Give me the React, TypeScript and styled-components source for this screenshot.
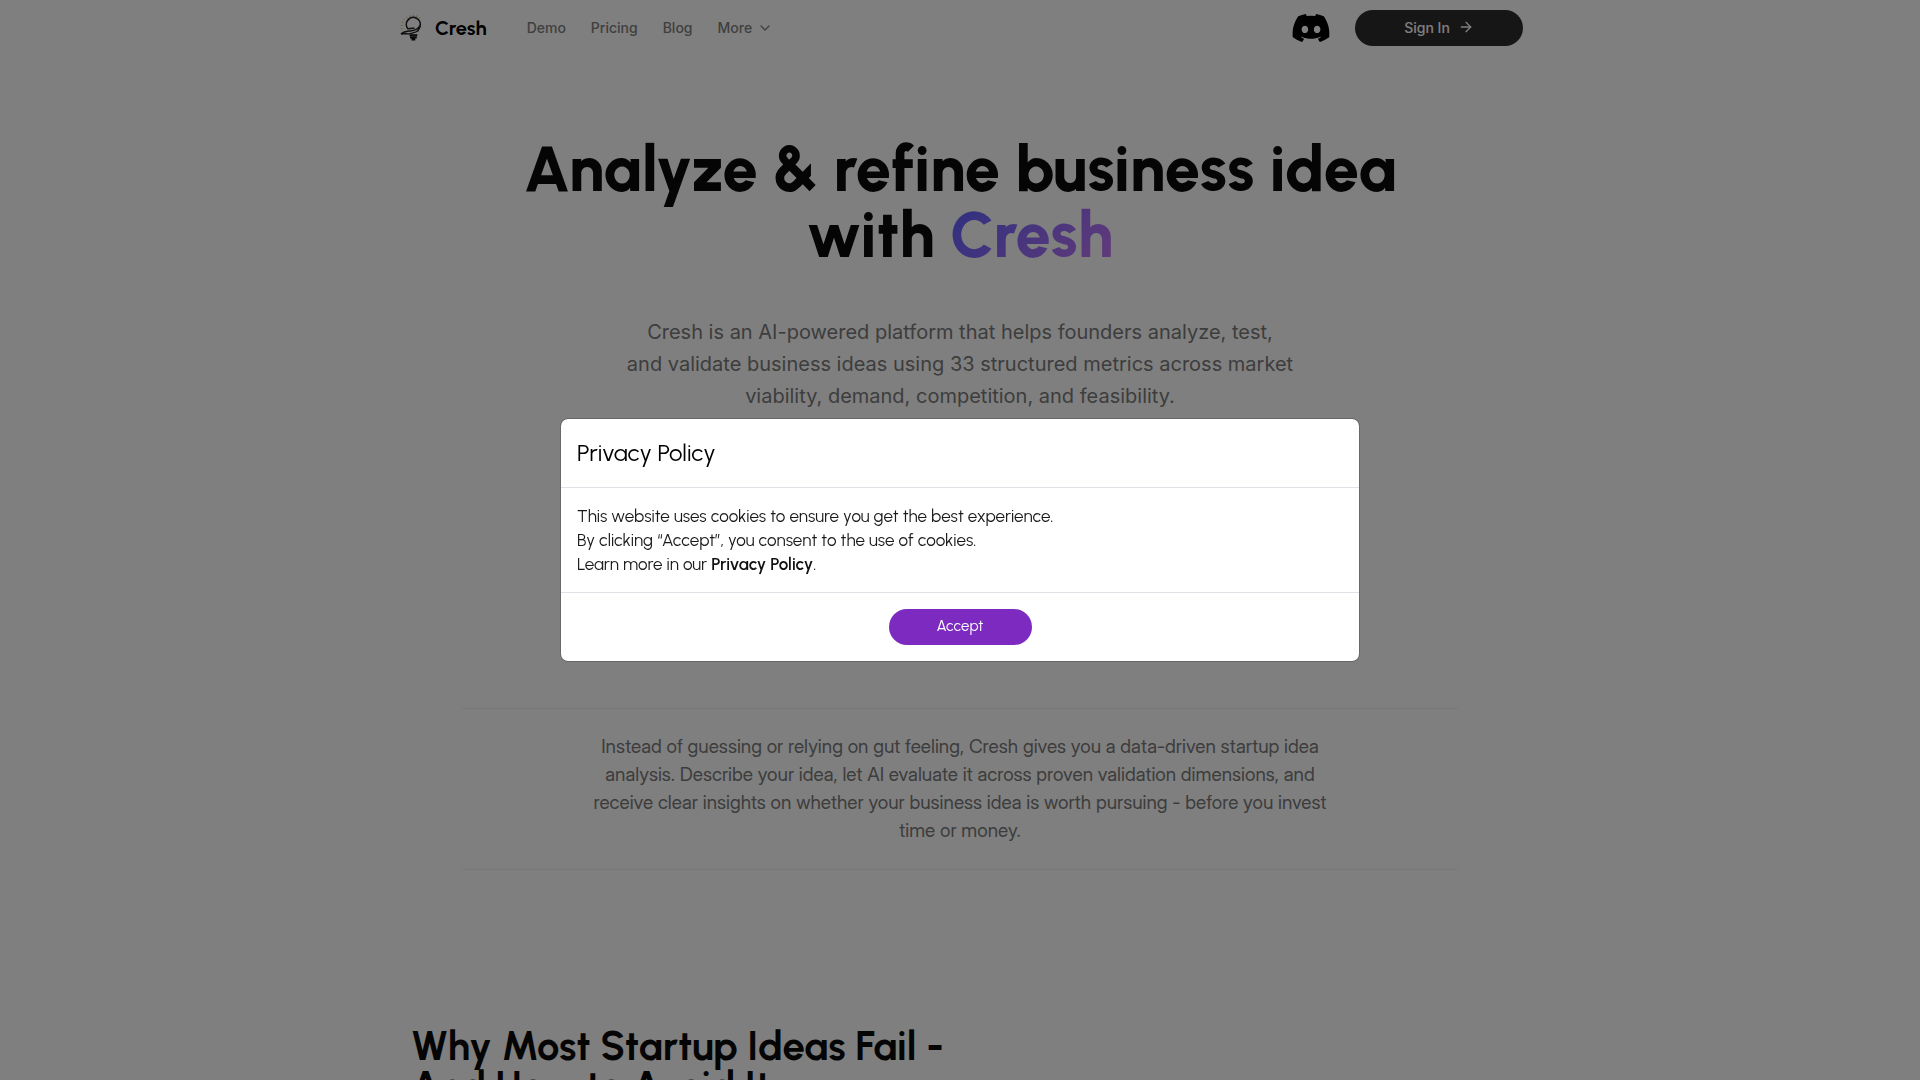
import React, { useState } from "react";
import styled, { createGlobalStyle } from "styled-components";
import { ArrowRight, ChevronDown } from "lucide-react";
import { FaDiscord } from "react-icons/fa";

const display = `Urbanist, Lato, "Open Sans", sans-serif`;
const text = `Inter, Roboto, sans-serif`;

const GlobalStyle = createGlobalStyle`
  *, *::before, *::after { box-sizing: border-box; }
  body {
    margin: 0;
    background: #fff;
    color: #0a0a0a;
    font-family: ${display};
  }
  h1, h2, p { margin: 0; }
`;

const Page = styled.div<{ $locked: boolean }>`
  ${(p) => (p.$locked ? "height: 100vh; overflow: hidden;" : "")}
`;

const Header = styled.header`
  display: flex;
  align-items: center;
  justify-content: space-between;
  width: 100%;
  max-width: 1126px;
  min-height: 56px;
  margin: 0 auto;
`;

const Group = styled.div<{ $gap: number }>`
  display: flex;
  align-items: center;
  gap: ${(p) => p.$gap}px;
`;

const Brand = styled.a`
  display: flex;
  align-items: center;
  gap: 8px;
  color: #000;
  font-size: 20px;
  line-height: 28px;
  font-weight: 700;
  text-decoration: none;
`;

const Nav = styled.nav`
  display: flex;
  align-items: center;
  gap: 25px;
`;

const navText = `
  font-family: ${text};
  font-size: 14px;
  line-height: 20px;
  font-weight: 500;
  color: #808080;
`;

const NavLink = styled.a`
  ${navText}
  text-decoration: none;
`;

const NavButton = styled.button`
  ${navText}
  display: flex;
  align-items: center;
  gap: 5px;
  padding: 0;
  border: 0;
  background: none;
`;

const DiscordLink = styled.a`
  display: flex;
  color: #000;
`;

const SignIn = styled.button`
  display: flex;
  align-items: center;
  justify-content: center;
  gap: 8px;
  width: 168px;
  height: 36px;
  padding: 0 0 2px;
  border: 0;
  border-radius: 18px;
  background: #2c2c2c;
  color: #fff;
  font-family: ${text};
  font-size: 14px;
  font-weight: 500;
`;

const Hero = styled.section`
  display: flex;
  flex-direction: column;
  align-items: center;
  gap: 48px;
  padding: 80px 24px 0;
  min-height: 652px;
  text-align: center;
`;

const Title = styled.h1`
  max-width: 960px;
  font-size: 63px;
  line-height: 66px;
  font-weight: 800;
  color: #0a0a0a;
`;

const Accent = styled.span`
  background: linear-gradient(135deg, #6c63ff 15%, #c977f5);
  background-clip: text;
  -webkit-background-clip: text;
  color: transparent;
`;

const Lead = styled.p`
  max-width: 700px;
  font-family: ${text};
  font-size: 20px;
  line-height: 32px;
  color: #7a7a7a;
`;

const Summary = styled.section`
  display: flex;
  justify-content: center;
  width: 100%;
  max-width: 996px;
  margin: 0 auto;
  padding: 24px;
  border-top: 1px solid #f0f0f0;
  border-bottom: 1px solid #f0f0f0;
`;

const SummaryText = styled.p`
  max-width: 752px;
  font-family: "Inter Display", ${text};
  font-size: 19px;
  line-height: 28px;
  color: #7a7a7a;
  text-align: center;
`;

const Reasons = styled.section`
  max-width: 1098px;
  margin: 0 auto;
  padding: 156px 0;
`;

const SectionTitle = styled.h2`
  max-width: 560px;
  font-size: 40px;
  line-height: 40px;
  font-weight: 700;
  color: #0a0a0a;
`;

const Backdrop = styled.div`
  position: fixed;
  inset: 0;
  display: flex;
  align-items: center;
  justify-content: center;
  padding: 16px;
  background: rgba(0, 0, 0, 0.5);
`;

const Dialog = styled.div`
  width: 100%;
  max-width: 800px;
  border: 1px solid rgba(0, 0, 0, 0.18);
  border-radius: 8px;
  background: #fff;
  background-clip: padding-box;
`;

const DialogHeader = styled.div`
  padding: 16px;
  border-bottom: 1px solid #dee2e6;
`;

const DialogTitle = styled.h2`
  font-size: 24px;
  line-height: 36px;
  font-weight: 400;
  color: #000;
`;

const DialogBody = styled.div`
  padding: 16px;
  font-size: 17px;
  line-height: 24px;
  color: #1a1a1a;
`;

const PolicyLink = styled.a`
  color: #111;
  font-weight: 600;
  text-decoration: none;
`;

const DialogFooter = styled.div`
  display: flex;
  justify-content: center;
  padding: 16px;
  border-top: 1px solid #dee2e6;
`;

const Accept = styled.button`
  width: 143px;
  height: 36px;
  padding: 0 0 2px;
  border: 0;
  border-radius: 18px;
  background: #7c2abf;
  color: #fff;
  font-family: ${display};
  font-size: 15px;
`;

const Logo = () => (
  <svg width="30" height="28" viewBox="-3 0 30 28" fill="none" aria-hidden="true">
    <g stroke="#d9bd7c" strokeWidth="1">
      <path d="M2.600 14.500l-1.800.4M2.600 11.500H.8M3.400 8.800l-1.700-.8M5 6.300L3.600 5M7.400 4.300l-1-1.700M10.200 3l-.5-1.800M13.200 2.700V.9M16.200 3.200l.6-1.800M18.800 4.600l1-1.500" />
    </g>
    <path d="M8.200 15.200A7 7 0 1 1 20 12.500c-.6 2-2 3.200-2.600 5" stroke="#222" strokeWidth="1.700" />
    <path d="M14.500 14.300c-1.800.2-4.600-.4-6.300.9M1 20c3.500-3.200 7-2.600 10.500-3.200 4-.6 7-2.300 8.500-5.300" stroke="#222" strokeWidth="1.500" />
    <path d="M1 20c4.500-1 7 .6 10.500-.6 2.500-.8 4.500-1.200 6-2.400" stroke="#222" strokeWidth="1.400" />
    <path d="M9.500 21.300h7.800M10 23.500h6.800M11.500 25.500h3.800" stroke="#111" strokeWidth="1.900" />
  </svg>
);

export default function App() {
  const [open, setOpen] = useState(true);
  return (
    <>
      <GlobalStyle />
      <Page $locked={open}>
        <Header>
          <Group $gap={40}>
            <Brand href="#">
              <Logo />
              Cresh
            </Brand>
            <Nav aria-label="Main">
              <NavLink href="#demo">Demo</NavLink>
              <NavLink href="#pricing">Pricing</NavLink>
              <NavLink href="#blog">Blog</NavLink>
              <NavButton type="button" aria-haspopup="true">
                More
                <ChevronDown size={16} aria-hidden="true" />
              </NavButton>
            </Nav>
          </Group>
          <Group $gap={24}>
            <DiscordLink href="#discord" aria-label="Discord">
              <FaDiscord size={40} />
            </DiscordLink>
            <SignIn type="button">
              Sign In
              <ArrowRight size={16} aria-hidden="true" />
            </SignIn>
          </Group>
        </Header>
        <main>
          <Hero>
            <Title>
              Analyze &amp; refine business idea
              <br />
              with <Accent>Cresh</Accent>
            </Title>
            <Lead>
              Cresh is an AI-powered platform that helps founders analyze, test,
              <br />
              and validate business ideas using 33 structured metrics across market
              <br />
              viability, demand, competition, and feasibility.
            </Lead>
          </Hero>
          <Summary>
            <SummaryText>
              Instead of guessing or relying on gut feeling, Cresh gives you a data-driven startup idea
              analysis. Describe your idea, let AI evaluate it across proven validation dimensions, and
              receive clear insights on whether your business idea is worth pursuing - before you invest
              time or money.
            </SummaryText>
          </Summary>
          <Reasons>
            <SectionTitle>
              Why Most Startup Ideas Fail -
              <br />
              And How to Avoid It
            </SectionTitle>
          </Reasons>
        </main>
      </Page>
      {open && (
        <Backdrop>
          <Dialog role="dialog" aria-modal="true" aria-labelledby="privacy-title">
            <DialogHeader>
              <DialogTitle id="privacy-title">Privacy Policy</DialogTitle>
            </DialogHeader>
            <DialogBody>
              <p>This website uses cookies to ensure you get the best experience.</p>
              <p>By clicking “Accept”, you consent to the use of cookies.</p>
              <p>
                Learn more in our <PolicyLink href="#privacy">Privacy Policy</PolicyLink>.
              </p>
            </DialogBody>
            <DialogFooter>
              <Accept type="button" onClick={() => setOpen(false)}>
                Accept
              </Accept>
            </DialogFooter>
          </Dialog>
        </Backdrop>
      )}
    </>
  );
}
